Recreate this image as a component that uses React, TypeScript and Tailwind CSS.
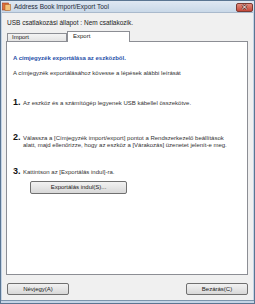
import React from "react";

const font = { fontFamily: '"Liberation Sans", Arial, sans-serif' };

function Btn({ label, className }: { label: string; className?: string }) {
  return (
    <div
      className={
        "flex items-center justify-center h-[12px] rounded-[2px] border border-[#707070] bg-gradient-to-b from-[#f2f2f2] to-[#d8d8d8] text-[6px] text-[#222] " +
        (className || "")
      }
    >
      {label}
    </div>
  );
}

export default function App() {
  return (
    <div
      className="w-[255px] h-[304px] flex flex-col bg-[#c4d4e6] border border-[#5a7592] overflow-hidden"
      style={font}
    >
      {/* title bar */}
      <div className="h-[11px] flex items-center px-[1px] bg-gradient-to-b from-[#dfe8f2] to-[#c9d8e8]">
        <svg width="9" height="9" viewBox="0 0 9 9" className="shrink-0">
          <rect x="0.5" y="1" width="6" height="7" fill="#e0703a" stroke="#a23c1c" strokeWidth="0.6" />
          <rect x="3" y="2.5" width="5.5" height="6" fill="#f3c37a" stroke="#b0612a" strokeWidth="0.6" />
        </svg>
        <span className="ml-[3px] text-[6.5px] text-[#1e2a3a]">Address Book Import/Export Tool</span>
        <div className="ml-auto mt-[1px] w-[17px] h-[9px] rounded-[2px] border border-[#7a3a32] bg-gradient-to-b from-[#e08c7e] to-[#c5473a] flex items-center justify-center">
          <svg width="7" height="6" viewBox="0 0 7 6">
            <path d="M1.2 0.8 L5.8 5.2 M5.8 0.8 L1.2 5.2" stroke="#5a1e18" strokeWidth="2" />
            <path d="M1.2 0.8 L5.8 5.2 M5.8 0.8 L1.2 5.2" stroke="#fff" strokeWidth="1" />
          </svg>
        </div>
      </div>

      {/* body */}
      <div className="flex-1 mx-[1px] bg-[#f0f0f0] border-t border-[#a9b9cc] flex flex-col pl-[4px] pr-[5px] pt-[6px]">
        <div className="ml-[1px] text-[6.5px] leading-[8px] text-[#222]">
          USB csatlakozási állapot : Nem csatlakozik.
        </div>

        {/* tabs */}
        <div className="flex items-end mt-[4px] h-[10px] relative z-10">
          <div className="w-[60px] h-[8px] border border-b-0 border-[#8c8e94] bg-gradient-to-b from-[#f4f4f4] to-[#e4e4e4] text-[6px] leading-[7px] pl-[4px] text-[#222] ml-[1px]">
            Import
          </div>
          <div className="w-[63px] h-[11px] -mb-[1px] border border-b-0 border-[#8c8e94] bg-white text-[6px] leading-[9px] pl-[5px] text-[#222]">
            Export
          </div>
        </div>

        {/* panel */}
        <div className="h-[234px] bg-white border border-[#8c8e94] flex flex-col pl-[6px] pt-[12px] text-[6px] text-[#333]">
          <div className="font-bold text-[#1f4fa8] leading-[8px]">
            A címjegyzék exportálása az eszközből.
          </div>
          <div className="mt-[7px] leading-[8px]">
            A címjegyzék exportálásához kövesse a lépések alábbi leírását
          </div>

          <div className="flex items-baseline mt-[19px]">
            <span className="w-[10px] text-[9px] font-bold text-[#111]">1.</span>
            <span>Az eszköz és a számítógép legyenek USB kábellel összekötve.</span>
          </div>

          <div className="flex items-baseline mt-[21px]">
            <span className="w-[10px] text-[9px] font-bold text-[#111]">2.</span>
            <span className="leading-[7px]">
              Válassza a [Címjegyzék import/export] pontot a Rendszerkezelő beállítások
              <br />
              alatt, majd ellenőrizze, hogy az eszköz a [Várakozás] üzenetet jelenít-e meg.
            </span>
          </div>

          <div className="flex items-baseline mt-[16px]">
            <span className="w-[10px] text-[9px] font-bold text-[#111]">3.</span>
            <span>Kattintson az [Exportálás indul]-ra.</span>
          </div>

          <Btn label="Exportálás indul(S)..." className="ml-[17px] mt-[3px] w-[97px] h-[13px]" />
        </div>

        {/* bottom buttons */}
        <div className="flex justify-between mt-[8px] pl-[1px]">
          <Btn label="Névjegy(A)" className="w-[62px]" />
          <Btn label="Bezárás(C)" className="w-[62px]" />
        </div>
      </div>
      <div className="h-[3px] bg-[#c4d4e6] border-t border-[#7d95ad]" />
    </div>
  );
}
